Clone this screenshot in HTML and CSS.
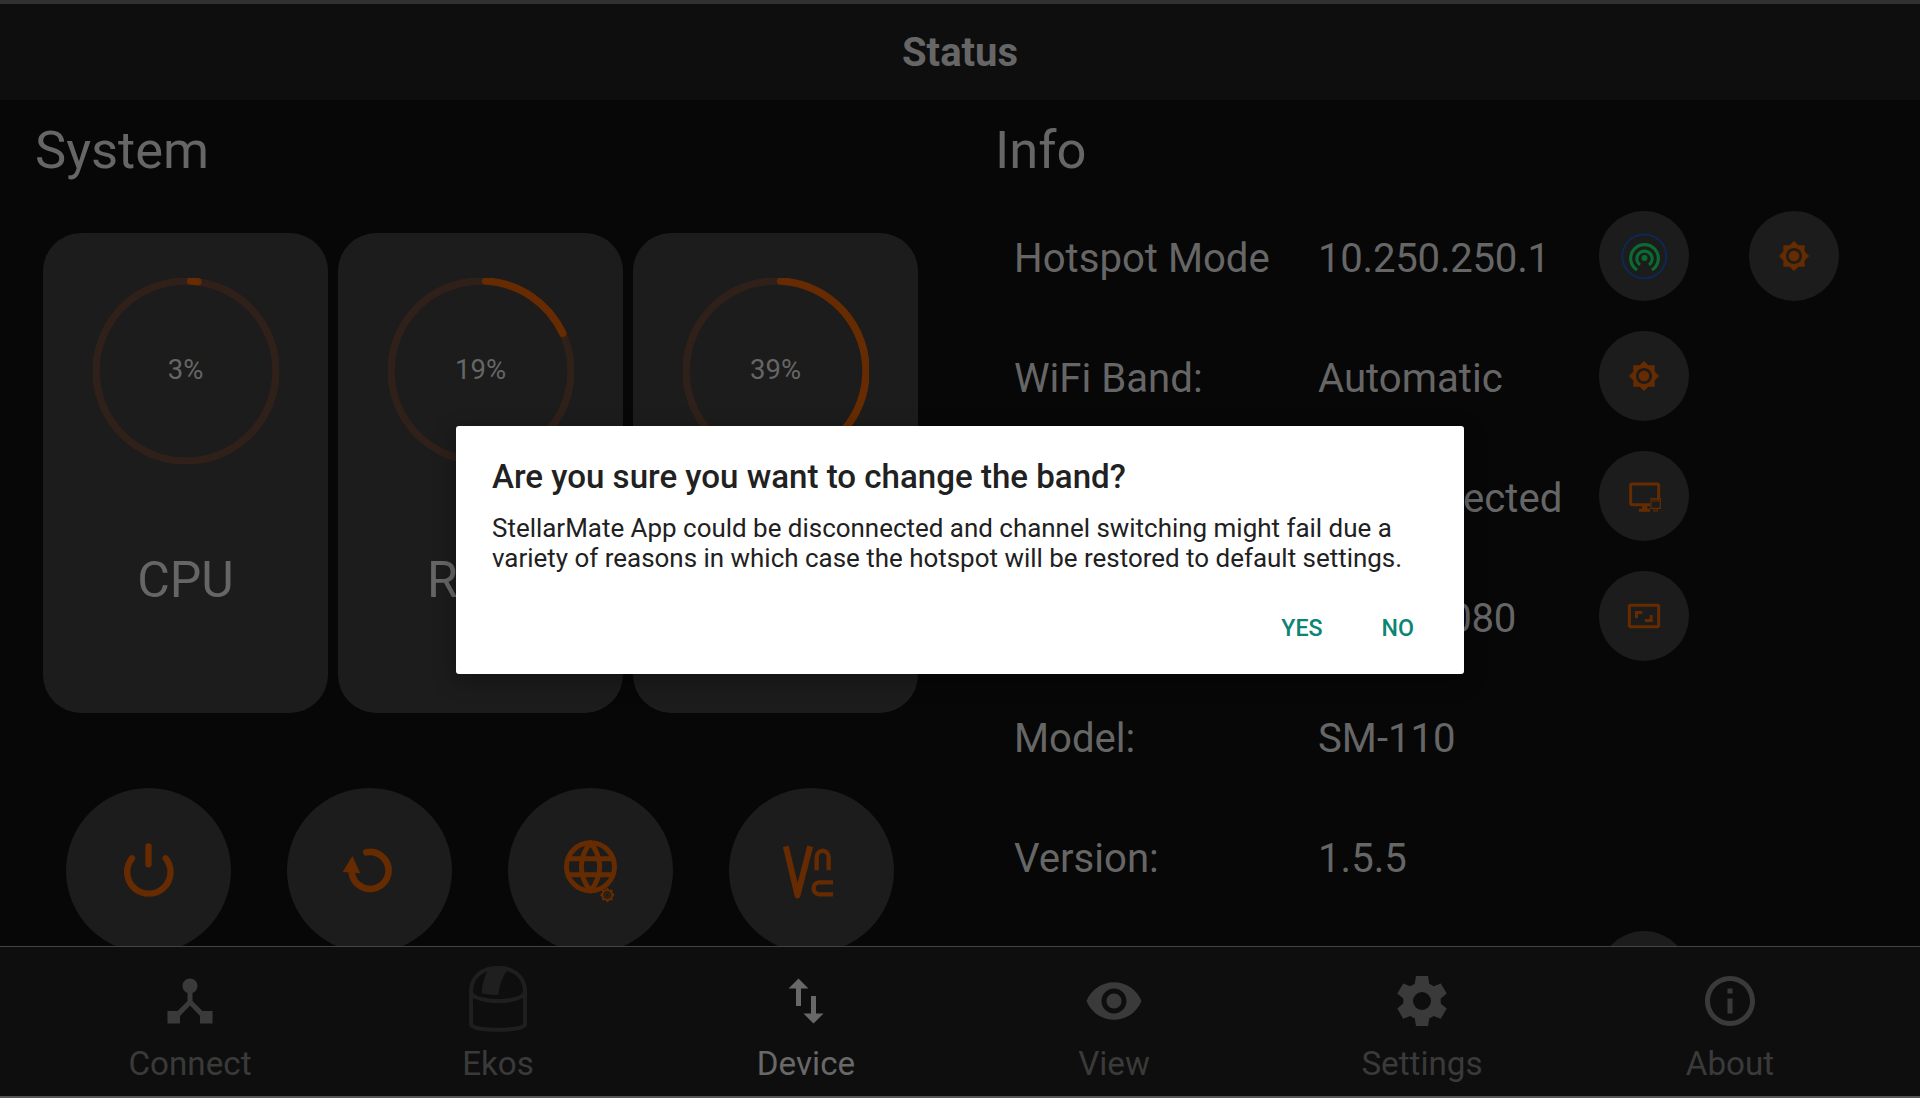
FILE: index.html
```html
<!DOCTYPE html>
<html lang="en">
<head>
<meta charset="utf-8">
<title>Status</title>
<link rel="stylesheet" href="styles.css">
</head>
<body>
<svg class="defs" aria-hidden="true">
  <symbol id="gear" viewBox="0 0 24 24"><path d="M20 8.69V4h-4.69L12 .69 8.69 4H4v4.69L.69 12 4 15.31V20h4.69L12 23.31 15.31 20H20v-4.69L23.31 12 20 8.69zM12 18c-3.31 0-6-2.69-6-6s2.69-6 6-6 6 2.69 6 6-2.69 6-6 6zm0-10c-2.21 0-4 1.79-4 4s1.79 4 4 4 4-1.79 4-4-1.79-4-4-4z"/></symbol>
</svg>
<div class="app">
  <header class="header"><h1>Status</h1></header>
  <main class="main">
    <section class="system">
      <h2>System</h2>
      <div class="cards">
        <div class="card">
          <div class="gauge"><svg viewBox="0 0 186 186"><circle class="track" cx="93" cy="93" r="90"/><circle class="arc" cx="93" cy="93" r="90" pathLength="100" stroke-dasharray="1.3 100"/></svg><span>3%</span></div>
          <div class="name">CPU</div>
        </div>
        <div class="card">
          <div class="gauge"><svg viewBox="0 0 186 186"><circle class="track" cx="93" cy="93" r="90"/><circle class="arc" cx="93" cy="93" r="90" pathLength="100" stroke-dasharray="17.3 100"/></svg><span>19%</span></div>
          <div class="name">RAM</div>
        </div>
        <div class="card">
          <div class="gauge"><svg viewBox="0 0 186 186"><circle class="track" cx="93" cy="93" r="90"/><circle class="arc" cx="93" cy="93" r="90" pathLength="100" stroke-dasharray="37.3 100"/></svg><span>39%</span></div>
          <div class="name">Disk</div>
        </div>
      </div>
      <div class="actions">
        <div class="action"><svg class="stroke" viewBox="78 53 495 495"><path stroke-width="19" d="M276 264A65 65 0 1 0 377 264"/><path stroke-width="19" d="M325.500 228V282"/></svg></div>
        <div class="action"><svg class="stroke" viewBox="741 53 495 495"><path stroke-width="20" d="M979 246A55.500 55.500 0 1 1 935 306"/><path class="solid" d="M937 257L961 309L908 305Z"/></svg></div>
        <div class="action"><svg class="stroke" viewBox="84 53 495 495"><circle cx="331.500" cy="289.500" r="72" stroke-width="15"/><path stroke-width="15" d="M331.500 217C295 262 295 317 331.500 362C368 317 368 262 331.500 217ZM265 265H398M265 313H398"/><circle class="badge" cx="382" cy="374" r="19"/><use class="solid" href="#gear" x="358.500" y="350.500" width="47" height="47"/><circle class="cutout" cx="382" cy="374" r="6"/></svg></div>
        <div class="action"><svg class="vnc" viewBox="747 53 495 495"><path stroke-width="18" d="M917.500 228L952.500 375L990.500 228"/><path stroke-width="13" d="M1010 300V263C1010 234 1046 234 1046 263V300M1059 336H1018C995 336 995 372 1018 372H1059"/></svg></div>
      </div>
    </section>
    <section class="info">
      <h2>Info</h2>
      <div class="row"><span>Hotspot Mode</span><span class="digits">10.250.250.1</span>
        <div class="tools">
          <div class="tool"><svg viewBox="57 63 270 270"><circle class="ring" cx="193" cy="199" r="66"/><g class="wifi"><circle class="dot" cx="193.500" cy="204" r="9"/><path d="M180 225A23 23 0 1 1 207 225"/><path d="M171 240A41.500 41.500 0 1 1 216 240"/></g></svg></div>
          <div class="tool"><svg viewBox="0 0 90 90"><use class="solid" href="#gear" x="29" y="29" width="32" height="32"/></svg></div>
        </div>
      </div>
      <div class="row"><span>WiFi Band:</span><span>Automatic</span>
        <div class="tools"><div class="tool"><svg viewBox="0 0 90 90"><use class="solid" href="#gear" x="29" y="29" width="32" height="32"/></svg></div></div>
      </div>
      <div class="row"><span>Ethernet:</span><span>Disconnected</span>
        <div class="tools"><div class="tool"><svg class="stroke square" viewBox="57 63 270 270"><rect x="152" y="162" width="84" height="62" rx="4" stroke-width="9"/><path class="solid" d="M186 227H202V236H210V245H177V236H186Z"/><path class="badge" d="M211 204H243V237H234V245H220V237H211Z"/><path stroke-width="3.500" d="M213 206H241V235H213ZM219 206V215M225 206V215M231 206V215M236 206V215M222 235V243H232V235"/></svg></div></div>
      </div>
      <div class="row"><span>Resolution:</span><span class="digits">1920x1080</span>
        <div class="tools"><div class="tool"><svg class="stroke square" viewBox="57 423 270 270"><rect x="148" y="526" width="88" height="64" rx="4" stroke-width="9"/><path stroke-width="9" d="M169.500 564V547.500H187M195 571.500H213.500V555"/></svg></div></div>
      </div>
      <div class="row"><span>Model:</span><span>SM-110</span></div>
      <div class="row"><span>Version:</span><span>1.5.5</span></div>
      <div class="row"><span></span><span></span><div class="tools"><div class="tool"></div></div></div>
    </section>
  </main>
  <nav class="nav">
    <div class="tab"><svg viewBox="0 0 24 24"><path d="M17 16l-4-4V8.820C14.160 8.400 15 7.300 15 6c0-1.660-1.340-3-3-3S9 4.340 9 6c0 1.300.840 2.400 2 2.820V12l-4 4H3v5h5v-3.050l4-4.200 4 4.200V21h5v-5h-4z"/></svg><span>Connect</span></div>
    <div class="tab"><svg class="dome" viewBox="1104 123 180 180"><path d="M1113 185C1113 140 1148 113 1194 113S1275 140 1275 185V283C1275 305 1113 305 1113 283ZM1113 187C1125 222 1263 222 1275 187"/><path class="slit" d="M1167 115Q1194 108 1224 118Q1198 152 1195 195Q1168 196 1145 190Q1146 150 1167 115Z"/></svg><span>Ekos</span></div>
    <div class="tab active"><svg viewBox="0 0 24 24"><path d="M9 3L5 6.990h3V14h2V6.990h3L9 3zm7 14.010V10h-2v7.010h-3L15 21l4-3.990h-3z"/></svg><span>Device</span></div>
    <div class="tab"><svg viewBox="0 0 24 24"><path d="M12 4.500C7 4.500 2.730 7.610 1 12c1.730 4.390 6 7.500 11 7.500s9.270-3.110 11-7.500c-1.730-4.390-6-7.500-11-7.500zM12 17c-2.760 0-5-2.240-5-5s2.240-5 5-5 5 2.240 5 5-2.240 5-5 5zm0-8c-1.660 0-3 1.340-3 3s1.340 3 3 3 3-1.340 3-3-1.340-3-3-3z"/></svg><span>View</span></div>
    <div class="tab"><svg viewBox="0 0 24 24"><path fill-rule="evenodd" d="M9.600 2H14.400L14.900 5.100L16.700 6.100L19.500 5L21.900 9L19.500 11V13L21.900 15L19.500 19.100L16.700 18L14.900 19L14.400 22H9.600L9.100 19L7.300 18L4.500 19.100L2.100 15L4.500 13V11L2.100 9L4.500 5L7.300 6.100L9.100 5.100ZM12 8.400a3.600 3.600 0 1 0 0 7.200a3.600 3.600 0 1 0 0-7.200Z"/></svg><span>Settings</span></div>
    <div class="tab"><svg viewBox="0 0 24 24"><path d="M11 7h2v2h-2zm0 4h2v6h-2zm1-9C6.480 2 2 6.480 2 12s4.480 10 10 10 10-4.480 10-10S17.520 2 12 2zm0 18c-4.410 0-8-3.590-8-8s3.590-8 8-8 8 3.590 8 8-3.590 8-8 8z"/></svg><span>About</span></div>
  </nav>
</div>
<div class="dialog" role="dialog">
  <h3>Are you sure you want to change the band?</h3>
  <p>StellarMate App could be disconnected and channel switching might fail due a<br>variety of reasons in which case the hotspot will be restored to default settings.</p>
  <div class="buttons"><span>YES</span><span>NO</span></div>
</div>
</body>
</html>
```
FILE: styles.css
```css
* { box-sizing: border-box; margin: 0; padding: 0; }
body { background: #070707; color: #666; font-family: Roboto, sans-serif; overflow: hidden; }
.defs { display: none; }
.app { width: 1920px; height: 1098px; display: flex; flex-direction: column; border-top: 4px solid #303030; border-bottom: 2px solid #555; }
.header { flex: none; height: 96px; background: #0e0e0e; display: flex; justify-content: center; }
.header h1 { font-size: 40px; font-weight: 700; line-height: 98px; }
.main { flex: 1; min-height: 0; overflow: hidden; display: grid; grid-template-columns: 960px 960px; }
h2 { font-size: 52.500px; font-weight: 400; line-height: 62px; }
.system { padding: 19px 0 0 35px; }
.cards { display: flex; gap: 10px; padding-left: 8px; margin-top: 52px; }
.card { width: 285px; height: 480px; border-radius: 38px; background: #1c1c1c; display: flex; flex-direction: column; align-items: center; padding-top: 45px; }
.gauge { width: 186px; height: 186px; display: grid; place-items: center; margin-left: 1px; }
.gauge svg, .gauge span { grid-area: 1 / 1; }
.gauge svg { width: 186px; height: 186px; }
.gauge span { font-size: 27.500px; line-height: 32px; padding-right: 1px; margin-top: -2px; }
.track, .arc { fill: none; stroke-width: 7.500px; }
.track { stroke: #2f2019; }
.arc { stroke: #662b00; stroke-linecap: round; transform: rotate(-87deg); transform-origin: 93px 93px; }
.name { font-size: 50px; line-height: 60px; margin-top: 86px; }
.actions { display: flex; gap: 56px; padding-left: 31px; margin-top: 75px; }
.action { width: 165px; height: 165px; flex: none; border-radius: 50%; background: #1c1c1c; }
.action svg, .tool svg { display: block; width: 100%; height: 100%; }
.solid, .stroke .solid { fill: #662b00; stroke: none; }
.stroke { fill: none; stroke: #662b00; stroke-linecap: round; stroke-linejoin: round; }
.square { stroke-linecap: butt; stroke-linejoin: miter; }
.stroke .badge { fill: #1c1c1c; stroke: none; }
.stroke .cutout { fill: #1c1c1c; stroke: none; }
.vnc { fill: none; stroke: #662b00; stroke-linejoin: round; }
.info { padding: 19px 0 0 35px; }
.info h2 { margin-bottom: 18px; }
.row { display: grid; grid-template-columns: 304px 284px auto; height: 120px; padding-left: 19px; align-items: center; font-size: 40.150px; line-height: 48px; white-space: nowrap; }
.digits { letter-spacing: -.25px; }
.tools { display: flex; gap: 60px; margin-top: -6px; margin-left: -3px; }
.tool { width: 90px; height: 90px; border-radius: 50%; background: #1c1c1c; }
.ring { fill: none; stroke: #0a2a5e; stroke-width: 5px; }
.wifi { fill: none; stroke: #0b6b30; stroke-width: 9.500px; }
.wifi .dot { fill: #0b6b30; stroke: none; }
.nav { flex: none; height: 150px; border-top: 1px solid #444; background: #0e0e0e; display: grid; grid-template-columns: repeat(6, 308px); justify-content: center; }
.tab { display: flex; flex-direction: column; align-items: center; padding-top: 24px; color: #3a3a3a; font-size: 33.200px; line-height: 40px; }
.tab.active { color: #686868; }
.tab svg { width: 60px; height: 60px; fill: currentColor; overflow: visible; margin-bottom: 13px; }
.tab .dome { fill: none; stroke: #1f1f1f; stroke-width: 12px; }
.tab .slit { fill: #1f1f1f; stroke: none; }
.dialog { position: absolute; left: 456px; top: 426px; width: 1008px; height: 248px; background: #fff; border-radius: 3px; padding: 32px 36px; color: #212121; box-shadow: 0 6px 22px rgba(0, 0, 0, .35); white-space: nowrap; }
.dialog h3 { font-size: 33.100px; line-height: 38px; font-weight: 500; }
.dialog p { font-size: 25.950px; line-height: 30px; margin-top: 17px; }
.buttons { display: flex; justify-content: flex-end; gap: 59px; padding-right: 14px; margin-top: 37px; font-size: 23.200px; line-height: 36px; font-weight: 500; color: #0d8574; }
```
